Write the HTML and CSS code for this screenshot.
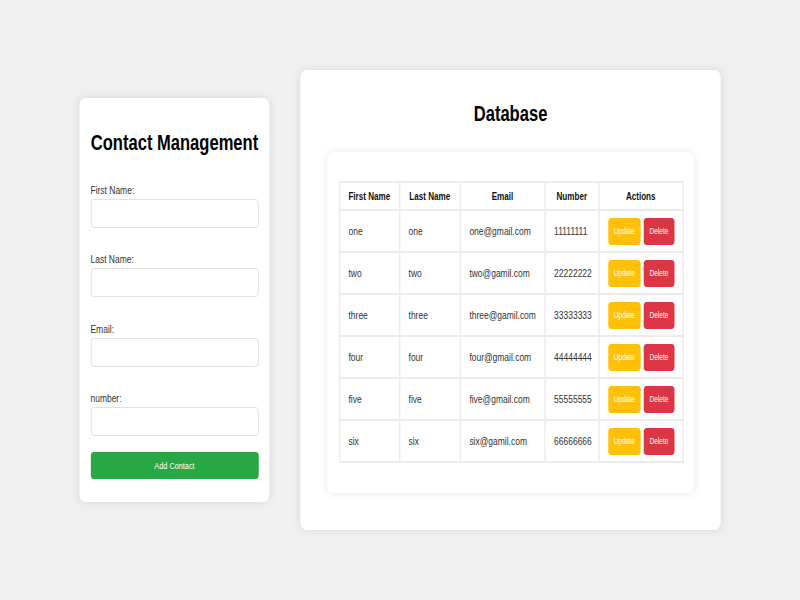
FILE: index.html
```html
<!DOCTYPE html>
<html lang="en">
<head>
<meta charset="utf-8">
<title>Contact Management</title>
<link rel="stylesheet" href="styles.css">
</head>
<body>
<div class="frame">
<div class="page">
  <div class="form-card">
    <h1 class="title">Contact Management</h1>
    <form class="form">
      <div class="group"><label>First Name:</label><input type="text"></div>
      <div class="group"><label>Last Name:</label><input type="text"></div>
      <div class="group"><label>Email:</label><input type="text"></div>
      <div class="group"><label>number:</label><input type="text"></div>
      <button type="button" class="add-btn">Add Contact</button>
    </form>
  </div>
  <div class="db-card">
    <h1 class="title">Database</h1>
    <div class="table-box">
      <table class="table">
        <colgroup>
          <col class="c1"><col class="c2"><col class="c3"><col class="c4"><col class="c5">
        </colgroup>
        <thead>
          <tr><th>First Name</th><th>Last Name</th><th>Email</th><th>Number</th><th>Actions</th></tr>
        </thead>
        <tbody>
          <tr><td>one</td><td>one</td><td>one@gmail.com</td><td>11111111</td><td><div class="actions"><button class="btn upd">Update</button><button class="btn del">Delete</button></div></td></tr>
          <tr><td>two</td><td>two</td><td>two@gamil.com</td><td>22222222</td><td><div class="actions"><button class="btn upd">Update</button><button class="btn del">Delete</button></div></td></tr>
          <tr><td>three</td><td>three</td><td>three@gamil.com</td><td>33333333</td><td><div class="actions"><button class="btn upd">Update</button><button class="btn del">Delete</button></div></td></tr>
          <tr><td>four</td><td>four</td><td>four@gmail.com</td><td>44444444</td><td><div class="actions"><button class="btn upd">Update</button><button class="btn del">Delete</button></div></td></tr>
          <tr><td>five</td><td>five</td><td>five@gmail.com</td><td>55555555</td><td><div class="actions"><button class="btn upd">Update</button><button class="btn del">Delete</button></div></td></tr>
          <tr><td>six</td><td>six</td><td>six@gamil.com</td><td>66666666</td><td><div class="actions"><button class="btn upd">Update</button><button class="btn del">Delete</button></div></td></tr>
        </tbody>
      </table>
    </div>
  </div>
</div>
</div>
</body>
</html>
```
FILE: styles.css
```css
html, body {
  margin: 0;
  height: 100%;
  overflow: hidden;
  background: #f0f0f0;
}

.frame {
  width: 800px;
  height: 600px;
  overflow: hidden;
}

.page {
  width: 1039px;
  height: 600px;
  transform: scaleX(0.77);
  transform-origin: 0 0;
  display: flex;
  align-items: center;
  justify-content: center;
  gap: 40.3px;
  font-family: "Liberation Sans", Arial, sans-serif;
  color: #333;
}

.form-card {
  width: 246.8px;
  box-sizing: border-box;
  padding: 11px 14.3px;
  background: #fff;
  border-radius: 8px;
  box-shadow: 0 0 10px rgba(0, 0, 0, 0.1);
}

.title {
  margin: 0;
  font-size: 21.5px;
  line-height: 24px;
  font-weight: bold;
  color: #000;
  text-align: center;
}

.form-card .title {
  margin-top: 22px;
}

.form {
  margin: 29px 0 0;
}

.group {
  margin-bottom: 25.5px;
}

.group:last-of-type {
  margin-bottom: 15.5px;
}

.group label {
  display: block;
  font-size: 11px;
  line-height: 13px;
  color: #333;
  margin-bottom: 2px;
}

.group input {
  display: block;
  width: 100%;
  box-sizing: border-box;
  height: 29px;
  margin: 0;
  padding: 0 8px;
  border: 1px solid #ddd;
  border-radius: 4px;
  background: #fff;
}

.add-btn {
  display: block;
  width: 100%;
  height: 27px;
  margin: 0 0 12.4px;
  border: none;
  border-radius: 4px;
  background: #28a745;
  color: #fff;
  font-family: "Liberation Sans", Arial, sans-serif;
  font-size: 9.5px;
}

.db-card {
  width: 545.5px;
  box-sizing: border-box;
  padding: 32px 35px 37.3px;
  background: #fff;
  border-radius: 8px;
  box-shadow: 0 0 10px rgba(0, 0, 0, 0.1);
}

.table-box {
  margin-top: 26.3px;
  padding: 29px 14.3px 29.4px;
  background: #fff;
  border-radius: 8px;
  box-shadow: 0 0 10px rgba(0, 0, 0, 0.1);
}

.table {
  width: 100%;
  border-collapse: collapse;
  table-layout: fixed;
  font-size: 11px;
  color: #333;
}

.c1 { width: 78px; }
.c2 { width: 79px; }
.c3 { width: 110px; }
.c4 { width: 70px; }
.c5 { width: 109px; }

.table th {
  padding: 6.5px 0;
  line-height: 13px;
  font-size: 10.5px;
  font-weight: bold;
  color: #111;
  text-align: center;
  border: 2px solid #ececec;
}

.table td {
  padding: 6.5px 0 6.5px 11px;
  text-align: left;
  border: 2px solid #ececec;
  white-space: nowrap;
}

.actions {
  display: flex;
  gap: 4px;
}

.btn {
  height: 27px;
  margin: 0;
  padding: 0 7.5px;
  border: none;
  border-radius: 4px;
  color: #fff;
  font-family: "Liberation Sans", Arial, sans-serif;
  font-size: 8.5px;
}

.upd { background: #ffc107; }
.del { background: #dc3545; }
```
